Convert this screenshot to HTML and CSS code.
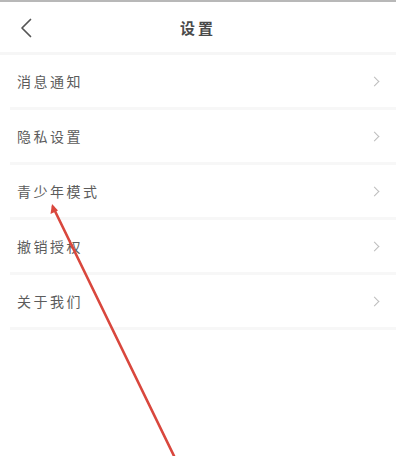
FILE: index.html
```html
<!DOCTYPE html>
<html lang="zh-CN">
<head>
    <meta charset="UTF-8">
    <meta content="width=device-width, initial-scale=1.0" name="viewport">
    <title>设置</title>
    <link rel="stylesheet" href="styles.css">
</head>
<body>
<div class="page">
    <div class="header">
        <a class="back" href="#">
            <svg width="12" height="20" viewBox="0 0 12 20">
                <path d="M10.5 1.5 L2 10 L10.5 18.5" fill="none" stroke="#555" stroke-width="1.7" stroke-linecap="round" stroke-linejoin="round"/>
            </svg>
        </a>
        <h1>设置</h1>
    </div>

    <ul class="menu">
        <li class="item"><span>消息通知</span><i class="arrow"></i></li>
        <li class="item"><span>隐私设置</span><i class="arrow"></i></li>
        <li class="item"><span>青少年模式</span><i class="arrow"></i></li>
        <li class="item"><span>撤销授权</span><i class="arrow"></i></li>
        <li class="item"><span>关于我们</span><i class="arrow"></i></li>
    </ul>

    <!-- annotation arrow drawn over the list -->
    <svg class="pointer" width="396" height="456" viewBox="0 0 396 456">
        <line x1="53" y1="207" x2="175" y2="458" stroke="#d9473d" stroke-width="2.6" stroke-linecap="round"/>
        <path d="M52 204 L50.5 214 L58 210.5 Z" fill="#d9473d"/>
    </svg>
</div>
</body>
</html>
```

FILE: styles.css
```css
body {
    margin: 0;
    padding: 0;
    background-color: #fff;
    font-family: "Noto Sans CJK SC", "Noto Sans", sans-serif;
    color: #555;
}

.page {
    position: relative;
    width: 396px;
    height: 456px;
    overflow: hidden;
    border-top: 2px solid #b8b8b8;
    box-sizing: border-box;
}

.header {
    position: relative;
    height: 50px;
    display: flex;
    align-items: center;
    justify-content: center;
    border-bottom: 3px solid #f6f6f6;
}

.back {
    position: absolute;
    left: 20px;
    top: 16px;
    display: flex;
}

.header h1 {
    margin: 0;
    font-size: 15px;
    font-weight: 700;
    letter-spacing: 3px;
    color: #4a4a4a;
}

.menu {
    list-style: none;
    margin: 0;
    padding: 0;
}

.item {
    height: 55px;
    box-sizing: border-box;
    display: flex;
    align-items: center;
    justify-content: space-between;
    padding: 0 16px 3px 17px;
    position: relative;
}

.item::after {
    content: "";
    position: absolute;
    left: 10px;
    right: 0;
    bottom: 0;
    height: 3px;
    background: #f7f7f7;
}

.item span {
    font-size: 14px;
    letter-spacing: 2.5px;
    color: #5c5c5c;
}

.arrow {
    width: 6px;
    height: 6px;
    border-top: 1.3px solid #bdbdbd;
    border-right: 1.3px solid #bdbdbd;
    transform: rotate(45deg);
    margin-right: 2px;
}

.pointer {
    position: absolute;
    left: 0;
    top: -2px;
    pointer-events: none;
}
```
